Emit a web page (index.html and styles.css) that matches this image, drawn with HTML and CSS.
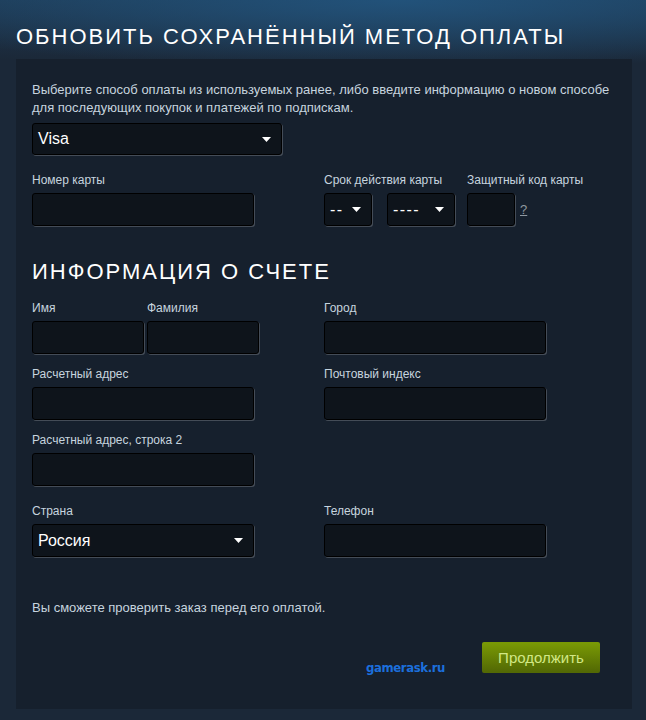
FILE: index.html
```html
<!DOCTYPE html>
<html lang="ru">
  <head>
    <meta charset="UTF-8" />
    <meta name="viewport" content="width=device-width, initial-scale=1.0" />
    <title>Обновить сохранённый метод оплаты</title>
    <link rel="stylesheet" href="styles.css">
  </head>
  <body>
    <div class="page">
      <h1 class="page-title">Обновить сохранённый метод оплаты</h1>

      <div class="panel">
        <p class="intro">Выберите способ оплаты из используемых ранее, либо введите информацию о новом способе для последующих покупок и платежей по подпискам.</p>

        <div class="dropdown method">
          <span>Visa</span>
          <svg width="9" height="5" viewBox="0 0 9 5"><path d="M0 0h9L4.5 5z" fill="#fff"/></svg>
        </div>

        <div class="card-row">
          <div class="field card-number">
            <label>Номер карты</label>
            <input type="text" />
          </div>
          <div class="field expiry">
            <label>Срок действия карты</label>
            <div class="expiry-selects">
              <div class="dropdown small month">
                <span>--</span>
                <svg width="9" height="5" viewBox="0 0 9 5"><path d="M0 0h9L4.5 5z" fill="#fff"/></svg>
              </div>
              <div class="dropdown small year">
                <span>----</span>
                <svg width="9" height="5" viewBox="0 0 9 5"><path d="M0 0h9L4.5 5z" fill="#fff"/></svg>
              </div>
            </div>
          </div>
          <div class="field cvv">
            <label>Защитный код карты</label>
            <div class="cvv-wrap">
              <input type="text" />
              <a href="#" class="help">?</a>
            </div>
          </div>
        </div>

        <h2 class="section-title">Информация о счете</h2>

        <div class="billing">
          <div class="name-pair">
            <div class="field half">
              <label>Имя</label>
              <input type="text" />
            </div>
            <div class="field half">
              <label>Фамилия</label>
              <input type="text" />
            </div>
          </div>
          <div class="field">
            <label>Город</label>
            <input type="text" />
          </div>

          <div class="field">
            <label>Расчетный адрес</label>
            <input type="text" />
          </div>
          <div class="field">
            <label>Почтовый индекс</label>
            <input type="text" />
          </div>

          <div class="field">
            <label>Расчетный адрес, строка 2</label>
            <input type="text" />
          </div>
          <div></div>

          <div class="field country">
            <label>Страна</label>
            <div class="dropdown">
              <span>Россия</span>
              <svg width="9" height="5" viewBox="0 0 9 5"><path d="M0 0h9L4.5 5z" fill="#fff"/></svg>
            </div>
          </div>
          <div class="field country">
            <label>Телефон</label>
            <input type="text" />
          </div>
        </div>

        <p class="note">Вы сможете проверить заказ перед его оплатой.</p>

        <div class="actions">
          <span class="watermark">gamerask.ru</span>
          <a href="#" class="btn-green">Продолжить</a>
        </div>
      </div>
    </div>
  </body>
</html>
```

FILE: styles.css
```css
body {
  margin: 0;
  font-family: Arial, "Liberation Sans", sans-serif;
  color: #c6d4df;
  background: radial-gradient(ellipse 560px 70px at 62% 0, #22527a 0%, rgba(27, 40, 56, 0) 100%) no-repeat,
    linear-gradient(to bottom, #1e3a54 0, #1b2838 60px) no-repeat,
    #1b2838;
}

.page {
  width: 616px;
  margin-left: 16px;
  padding-top: 22px;
}

.page-title,
.section-title {
  margin: 0;
  font-size: 22px;
  line-height: 30px;
  font-weight: normal;
  letter-spacing: 2px;
  text-transform: uppercase;
  color: #fff;
}

.page-title {
  margin-bottom: 7px;
}

.panel {
  background-color: #16202d;
  padding: 22px 16px;
}

.intro {
  margin: 0;
  font-size: 13px;
  line-height: 18px;
}

/* inputs and dropdowns share the sunken steam look */
.field input,
.dropdown {
  box-sizing: border-box;
  background-color: #0e141b;
  border: 1px solid #000;
  border-radius: 3px;
  box-shadow: 1px 1px 0 rgba(255, 255, 255, 0.2);
}

.field input {
  display: block;
  width: 222px;
  height: 33px;
  outline: none;
  color: #fff;
}

.field label {
  display: block;
  font-size: 12px;
  line-height: 16px;
  margin-bottom: 5px;
}

.dropdown {
  display: flex;
  justify-content: space-between;
  align-items: center;
  height: 33px;
  padding: 0 10px 0 5px;
  font-size: 16px;
  color: #fff;
}

.dropdown.method {
  width: 250px;
  height: 32px;
  margin-top: 6px;
}

.dropdown.small span {
  letter-spacing: 1.4px;
}

.card-row {
  display: flex;
  margin-top: 17px;
}

.card-number {
  margin-right: 70px;
}

.expiry {
  margin-right: 12px;
}

.expiry-selects {
  display: flex;
  gap: 15px;
}

.month {
  width: 48px;
}

.year {
  width: 68px;
}

.cvv-wrap {
  display: flex;
  align-items: center;
  gap: 5px;
}

.cvv-wrap input {
  width: 48px;
}

.help {
  font-size: 13px;
  color: #8f98a0;
}

.section-title {
  margin: 31px 0 13px;
}

.billing {
  display: grid;
  grid-template-columns: 222px 222px;
  column-gap: 70px;
  row-gap: 12px;
}

.name-pair {
  display: flex;
  gap: 3px;
}

.field.half input {
  width: 112px;
}

.country {
  margin-top: 5px;
}

.country .dropdown {
  width: 222px;
}

.note {
  margin: 42px 0 0;
  font-size: 13px;
  line-height: 18px;
}

.actions {
  display: flex;
  justify-content: flex-end;
  align-items: flex-end;
  margin-top: 25px;
  margin-bottom: 14px;
}

.watermark {
  font-family: "DejaVu Sans Condensed", "DejaVu Sans", sans-serif;
  font-weight: bold;
  font-size: 13px;
  line-height: 12px;
  letter-spacing: -0.4px;
  color: #1c6fdc;
  margin: 0 37px -1px 0;
}

.btn-green {
  display: block;
  width: 118px;
  height: 31px;
  margin-right: 16px;
  border-radius: 2px;
  text-align: center;
  font-size: 15px;
  line-height: 31px;
  text-decoration: none;
  color: #d2e885;
  background: linear-gradient(to bottom, #799905 5%, #536904 95%);
}
```
